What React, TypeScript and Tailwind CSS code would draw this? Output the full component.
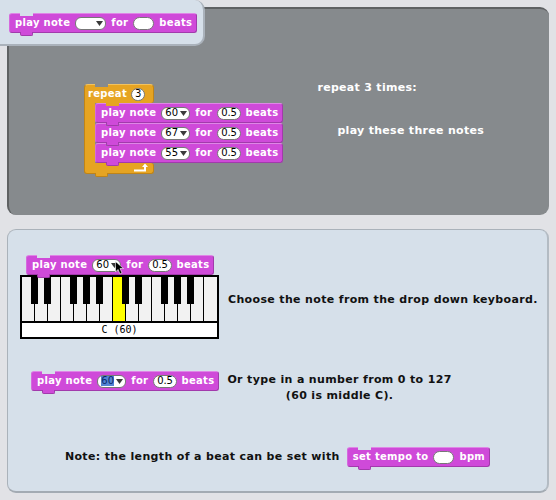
import React from "react";

const FONT = "font-['DejaVu_Sans','Liberation_Sans',sans-serif]";

function Drop({ v, w = "min-w-[13px]", hl = false }: { v?: string; w?: string; hl?: boolean }) {
  return (
    <span className="flex h-[13px] items-center gap-[2px] rounded-[6px] border border-[#777] bg-white pl-[3px] pr-[2px] text-[10px] font-normal leading-none tracking-normal text-black">
      <span className={`${w} ${hl ? "bg-[#5484d4] text-[#0b2a6a]" : ""}`}>{v}</span>
      <svg width="7" height="5" viewBox="0 0 7 5">
        <path d="M0 0h7L3.5 5z" fill="#3a3a3a" />
      </svg>
    </span>
  );
}

function Num({ v, w = "min-w-[21px]" }: { v?: string; w?: string }) {
  return (
    <span className={`flex h-[13px] items-center justify-center rounded-full border border-[#777] bg-white px-[3px] text-[10px] font-normal leading-none tracking-tight text-black ${w}`}>
      {v}
    </span>
  );
}

function Block({
  children,
  notch = "bg-[#868a8d]",
  className = "",
}: {
  children: React.ReactNode;
  notch?: string;
  className?: string;
}) {
  return (
    <div
      className={`relative flex h-[20px] w-fit items-center gap-[5px] rounded-[3px] border border-[#a23aac] border-l-[#d56ade] border-t-[#df86e6] bg-[#cf4ad9] pl-[5px] pr-[4px] text-[10px] font-bold leading-none tracking-[0.3px] text-white ${className}`}
    >
      <span className={`absolute -top-px left-[10px] h-[3px] w-[13px] ${notch}`} />
      <span className="absolute -bottom-[4px] left-[10px] z-10 h-[4px] w-[13px] rounded-b-[2px] border-b border-l border-r border-[#a23aac] bg-[#cf4ad9]" />
      {children}
    </div>
  );
}

function PlayNote({ n, hl, notch }: { n: string; hl?: boolean; notch?: string }) {
  return (
    <Block notch={notch}>
      <span>play note</span>
      <Drop v={n} hl={hl} />
      <span>for</span>
      <Num v="0.5" />
      <span>beats</span>
    </Block>
  );
}

const WHITE_KEYS = Array.from({ length: 15 }, (_, i) => i);
const BLACK_LEFT = [
  "left-[9px]",
  "left-[22px]",
  "left-[48px]",
  "left-[61px]",
  "left-[74px]",
  "left-[100px]",
  "left-[113px]",
  "left-[139px]",
  "left-[152px]",
  "left-[165px]",
];

function Keyboard() {
  return (
    <div className="w-[199px] border-2 border-black bg-white">
      <div className="relative flex h-[44px]">
        {WHITE_KEYS.map((i) => (
          <div
            key={i}
            className={`h-full w-[13px] ${i < 14 ? "border-r border-black" : ""} ${i === 7 ? "bg-[#ffff00]" : "bg-[#f2f2f2]"}`}
          />
        ))}
        {BLACK_LEFT.map((c) => (
          <div key={c} className={`absolute top-0 h-[27px] w-[7px] bg-black ${c}`} />
        ))}
      </div>
      <div className="flex h-[16px] items-center justify-center border-t-2 border-black font-['DejaVu_Sans_Mono',monospace] text-[10px] font-normal tracking-normal text-black">
        C (60)
      </div>
    </div>
  );
}

export default function App() {
  return (
    <div className={`relative flex h-[500px] w-[556px] flex-col gap-[14px] bg-[#e1e2e6] p-[7px] ${FONT}`}>
      {/* palette overlay */}
      <div className="absolute left-0 top-0 z-20 h-[46px] w-[205px] rounded-br-[10px] rounded-tr-[10px] border-b-2 border-r-2 border-[#aab2bb] bg-[#d6e0ea] pl-[9px] pt-[13px]">
        <Block notch="bg-[#d6e0ea]">
          <span>play note</span>
          <Drop w="min-w-[15px]" />
          <span>for</span>
          <Num />
          <span>beats</span>
        </Block>
      </div>

      {/* top script panel */}
      <div className="flex h-[208px] w-[542px] rounded-[9px] border-l-2 border-t-2 border-[#5e6163] bg-[#868a8d] pl-[75px] pt-[75px] text-white">
        <div className="flex w-fit flex-col">
          <div className="relative flex h-[19px] w-[70px] items-center gap-[4px] rounded-t-[4px] rounded-br-[3px] border border-b-0 border-[#bf8418] border-t-[#f2c25e] bg-[#e6a422] pl-[3px] text-[10px] font-bold leading-none tracking-[0.3px] text-white">
            <span className="absolute -top-px left-[10px] h-[3px] w-[13px] bg-[#868a8d]" />
            <span>repeat</span>
            <Num v="3" w="min-w-[13px]" />
          </div>
          <div className="flex">
            <div className="w-[11px] border-l border-[#bf8418] bg-[#e6a422]" />
            <div className="flex flex-col">
              <PlayNote n="60" notch="bg-[#e6a422]" />
              <PlayNote n="67" />
              <PlayNote n="55" />
            </div>
          </div>
          <div className="relative flex h-[11px] w-[70px] items-end justify-end rounded-b-[3px] rounded-tr-[3px] border border-t-0 border-[#bf8418] bg-[#e6a422] pb-[1px] pr-[4px]">
            <span className="absolute -bottom-[4px] left-[10px] h-[4px] w-[13px] rounded-b-[2px] border-b border-l border-r border-[#bf8418] bg-[#e6a422]" />
            <svg width="15" height="9" viewBox="0 0 15 9">
              <path d="M0 7.5H11V3" stroke="white" strokeWidth="2" fill="none" />
              <path d="M8 4L11 0.5L14 4z" fill="white" />
            </svg>
          </div>
        </div>
        <div className="ml-[34px] flex flex-col text-[11px] font-bold leading-[14px] tracking-[0.3px]">
          <div className="-mt-[3px]">repeat 3 times:</div>
          <div className="ml-[20px] mt-[29px]">play these three notes</div>
        </div>
      </div>

      {/* bottom help panel */}
      <div className="flex h-[264px] w-[542px] flex-col rounded-[9px] border border-[#aab2ba] border-b-2 border-r-2 border-b-[#a3abb3] border-r-[#b3bbc3] bg-[#d6e0ea] pl-[12px] pt-[25px] text-[11px] font-bold leading-[14px] tracking-[0.35px] text-[#111]">
        <div className="flex items-start">
          <div className="relative flex flex-col">
            <div className="ml-[6px]">
              <PlayNote n="60" notch="bg-[#d6e0ea]" />
            </div>
            <Keyboard />
            <svg className="absolute left-[95px] top-[6px] z-30" width="10" height="14" viewBox="0 0 10 14">
              <path d="M0.5 0.5V11L3 8.5L5 13L7 12L5 7.5H8.5Z" fill="black" stroke="white" strokeWidth="0.6" />
            </svg>
          </div>
          <div className="ml-[9px] mt-[38px]">Choose the note from the drop down keyboard.</div>
        </div>

        <div className="mt-[32px] flex items-start">
          <div className="ml-[11px]">
            <PlayNote n="60" hl notch="bg-[#d6e0ea]" />
          </div>
          <div className="ml-[8px] mt-[2px] text-center">
            <div>Or type in a number from 0 to 127</div>
            <div className="mt-[2px]">(60 is middle C).</div>
          </div>
        </div>

        <div className="-ml-[12px] mt-[44px] flex items-center justify-center gap-[7px]">
          <div>Note: the length of a beat can be set with</div>
          <Block notch="bg-[#d6e0ea]">
            <span>set tempo to</span>
            <Num />
            <span>bpm</span>
          </Block>
        </div>
      </div>
    </div>
  );
}
